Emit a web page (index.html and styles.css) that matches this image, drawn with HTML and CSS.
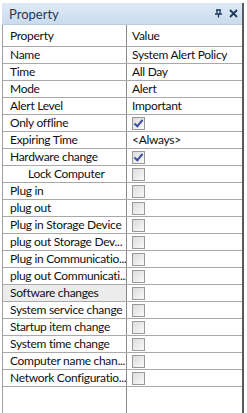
FILE: index.html
```html
<html lang="en">
<head>
<link rel="stylesheet" href="styles.css">
</head>
<body>
<div class="panel">
    <div class="titlebar">
        <span class="title">Property</span>
        <span class="tools">
            <svg class="pin" width="9" height="9" viewBox="0 0 9 9"><path d="M2 1h5M3 1v4M6 1v4M1 5h7M4.5 5v3.5" stroke="#1e395b" stroke-width="1.3" fill="none"/></svg>
            <svg class="close" width="9" height="9" viewBox="0 0 9 9"><path d="M1 1l7 7M8 1l-7 7" stroke="#1e395b" stroke-width="1.8" fill="none"/></svg>
        </span>
    </div>
    <div class="grid">
        <div class="row head"><div class="name">Property</div><div class="value">Value</div></div>
        <div class="row"><div class="name">Name</div><div class="value">System Alert Policy</div></div>
        <div class="row"><div class="name">Time</div><div class="value">All Day</div></div>
        <div class="row"><div class="name">Mode</div><div class="value">Alert</div></div>
        <div class="row"><div class="name">Alert Level</div><div class="value">Important</div></div>
        <div class="row"><div class="name">Only offline</div><div class="value"><span class="check on"></span></div></div>
        <div class="row"><div class="name">Expiring Time</div><div class="value">&lt;Always&gt;</div></div>
        <div class="row"><div class="name">Hardware change</div><div class="value"><span class="check on"></span></div></div>
        <div class="row"><div class="name sub">Lock Computer</div><div class="value"><span class="check"></span></div></div>
        <div class="row"><div class="name">Plug in</div><div class="value"><span class="check"></span></div></div>
        <div class="row"><div class="name">plug out</div><div class="value"><span class="check"></span></div></div>
        <div class="row"><div class="name">Plug in Storage Device</div><div class="value"><span class="check"></span></div></div>
        <div class="row"><div class="name">plug out Storage Dev...</div><div class="value"><span class="check"></span></div></div>
        <div class="row"><div class="name">Plug in Communicatio...</div><div class="value"><span class="check"></span></div></div>
        <div class="row"><div class="name">plug out Communicati...</div><div class="value"><span class="check"></span></div></div>
        <div class="row"><div class="name selected">Software changes</div><div class="value"><span class="check"></span></div></div>
        <div class="row"><div class="name">System service change</div><div class="value"><span class="check"></span></div></div>
        <div class="row"><div class="name">Startup item change</div><div class="value"><span class="check"></span></div></div>
        <div class="row"><div class="name">System time change</div><div class="value"><span class="check"></span></div></div>
        <div class="row"><div class="name">Computer name chan...</div><div class="value"><span class="check"></span></div></div>
        <div class="row"><div class="name">Network Configuratio...</div><div class="value"><span class="check"></span></div></div>
        <div class="row empty"><div class="name"></div><div class="value"></div></div>
    </div>
</div>
</body>
</html>
```

FILE: styles.css
```css
body {
    margin: 0;
    background: #fff;
    font-family: Lato, "Liberation Sans", sans-serif;
    font-size: 12px;
    color: #111;
}

.panel {
    margin: 3px 0 0 2px;
    width: 242px;
    height: 410px;
    display: flex;
    flex-direction: column;
    border-right: 2px solid #5a5a5a;
    box-sizing: border-box;
}

.titlebar {
    height: 22px;
    display: flex;
    align-items: center;
    justify-content: space-between;
    padding: 0 4px 0 7px;
    background: linear-gradient(#dfeaf6, #c9dbee);
    border-bottom: 1px solid #b9cbe0;
    box-sizing: border-box;
}

.title {
    font-size: 13px;
    color: #1e395b;
}

.tools {
    display: flex;
    align-items: center;
    gap: 6px;
}

.grid {
    flex: 1;
    display: flex;
    flex-direction: column;
    border-left: 1px solid #a0a0a0;
}

.row {
    display: flex;
    height: 17px;
    border-bottom: 1px solid #a9a9a9;
    box-sizing: border-box;
    letter-spacing: -0.3px;
}

.row.head {
    height: 22px;
}

.row.empty {
    flex: 1;
    border-bottom: none;
}

.name {
    width: 124px;
    padding-left: 7px;
    border-right: 1px solid #8a8a8a;
    white-space: nowrap;
    overflow: hidden;
    line-height: 16px;
    box-sizing: border-box;
}

.head .name, .head .value {
    line-height: 21px;
}

.name.sub {
    padding-left: 25px;
}

.name.selected {
    background: #ececec;
}

.value {
    flex: 1;
    padding-left: 5px;
    line-height: 16px;
    white-space: nowrap;
    display: flex;
    align-items: center;
}

.check {
    width: 11px;
    height: 11px;
    border: 1px solid #9a9a9a;
    background: linear-gradient(135deg, #dcdcdc, #fafafa);
    position: relative;
}

.check.on::after {
    content: "";
    position: absolute;
    left: 3px;
    top: 0;
    width: 3px;
    height: 7px;
    border-right: 2px solid #3b4fa0;
    border-bottom: 2px solid #3b4fa0;
    transform: rotate(40deg);
}
```
